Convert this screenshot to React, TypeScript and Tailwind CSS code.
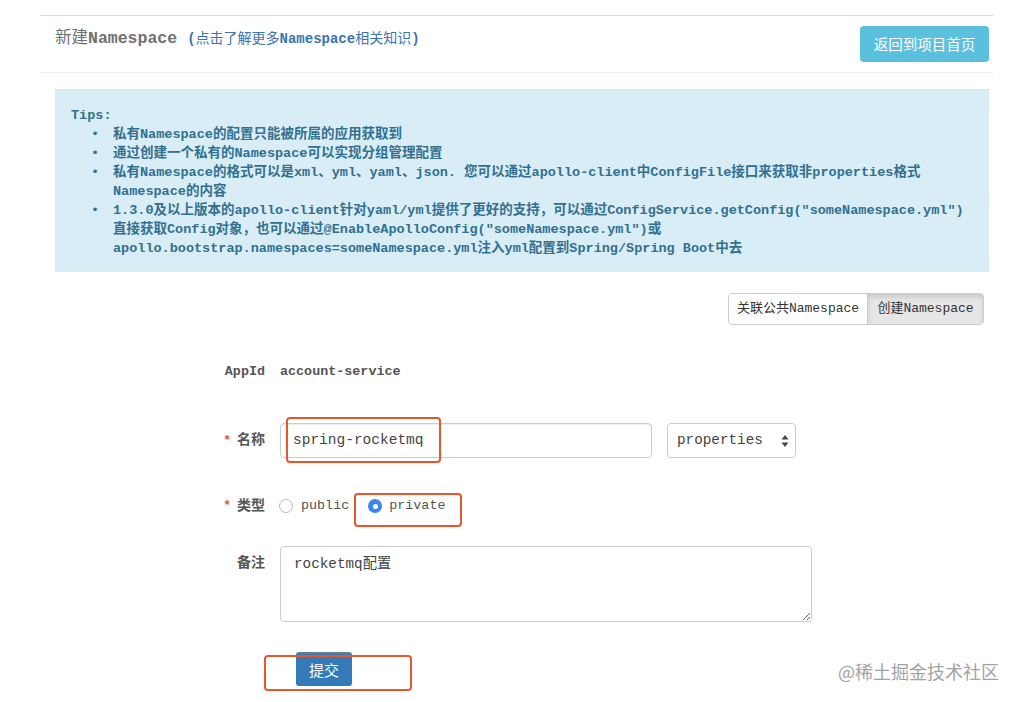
import React from 'react';

const mono = 'font-["Liberation_Mono","Noto_Sans_CJK_SC",monospace]';

const tips: string[][] = [
  ['私有Namespace的配置只能被所属的应用获取到'],
  ['通过创建一个私有的Namespace可以实现分组管理配置'],
  [
    '私有Namespace的格式可以是xml、yml、yaml、json. 您可以通过apollo-client中ConfigFile接口来获取非properties格式',
    'Namespace的内容',
  ],
  [
    '1.3.0及以上版本的apollo-client针对yaml/yml提供了更好的支持，可以通过ConfigService.getConfig("someNamespace.yml")',
    '直接获取Config对象，也可以通过@EnableApolloConfig("someNamespace.yml")或',
    'apollo.bootstrap.namespaces=someNamespace.yml注入yml配置到Spring/Spring Boot中去',
  ],
];

function Label({ text, required }: { text: string; required?: boolean }) {
  return (
    <div className="w-[56px] shrink-0 flex justify-end items-center gap-[6px] text-[14px] font-bold text-[#555] pr-[15px] box-content">
      {required && <span className="text-[#d9534f] text-[13px]">*</span>}
      <span>{text}</span>
    </div>
  );
}

function SelectArrows() {
  return (
    <svg width="8" height="14" viewBox="0 0 8 14" className="text-[#444]">
      <path d="M4 1 L7.5 5.5 H0.5 Z" fill="currentColor" />
      <path d="M4 13 L7.5 8.5 H0.5 Z" fill="currentColor" />
    </svg>
  );
}

export default function App() {
  return (
    <div className={`relative w-[1019px] h-[702px] bg-white overflow-hidden ${mono}`}>
      <div className="pl-[40px] pr-[26px] pt-[15px]">
        {/* header */}
        <div className="h-[58px] border-t border-b border-t-[#dcdcdc] border-b-[#ececec] flex items-center justify-between pl-[15px] pr-[4px]">
          <div className="flex items-baseline gap-[10px] -mt-[10px]">
            <span className="text-[16.5px] text-[#707070] font-bold">
              <span className="font-normal">新建</span>Namespace
            </span>
            <a className="text-[14px] text-[#3d74ad] font-bold">
              (<span className="font-normal">点击了解更多</span>Namespace<span className="font-normal">相关知识</span>)
            </a>
          </div>
          <button
            type="button"
            className="w-[129px] h-[36px] bg-[#5bc0de] text-white text-[14.5px] rounded-[4px] font-['Noto_Sans_CJK_SC',sans-serif]"
          >
            返回到项目首页
          </button>
        </div>

        {/* tips */}
        <div className="ml-[15px] mr-[4px] mt-[16px] h-[183px] bg-[#d9edf7] border-t border-[#cde6f1] text-[#31708f] text-[13.5px] leading-[19px] pt-[16px] pl-[16px]">
          <div className="font-bold">Tips:</div>
          <ul>
            {tips.map((lines, i) => (
              <li key={i} className="flex">
                <span className="w-[42px] text-right pr-[14px]">•</span>
                <div>
                  {lines.map((l, j) => (
                    <div key={j} className="whitespace-pre font-semibold">
                      {l}
                    </div>
                  ))}
                </div>
              </li>
            ))}
          </ul>
        </div>

        {/* switch */}
        <div className="flex justify-end mr-[9px] mt-[21px]">
          <div className="flex h-[32px] text-[13px] text-[#333] rounded-[4px] border border-[#ccc] overflow-hidden">
            <button type="button" className="w-[139px] bg-white border-r border-[#ccc]">
              关联公共Namespace
            </button>
            <button type="button" className="w-[115px] bg-[#e6e6e6] shadow-[inset_0_3px_5px_rgba(0,0,0,0.125)]">
              创建Namespace
            </button>
          </div>
        </div>

        {/* form */}
        <div className="ml-[169px] mt-[37px]">
          <div className="flex items-center h-[20px]">
            <div className="w-[56px] pr-[15px] box-content text-right text-[13.4px] font-bold text-[#555]">AppId</div>
            <div className="text-[13.4px] font-bold text-[#555]">account-service</div>
          </div>

          <div className="flex items-center mt-[41px]">
            <Label text="名称" required />
            <div className="w-[372px] h-[35px] border border-[#ccc] rounded-[4px] flex items-center pl-[12px] text-[14.5px] text-[#444] shadow-[inset_0_1px_1px_rgba(0,0,0,0.075)]">
              spring-rocketmq
            </div>
            <div className="ml-[15px] w-[129px] h-[35px] border border-[#ccc] rounded-[4px] flex items-center justify-between pl-[9px] pr-[6px] text-[14.3px] text-[#444]">
              <span>properties</span>
              <SelectArrows />
            </div>
          </div>

          <div className="flex items-center mt-[38px] h-[20px]">
            <Label text="类型" required />
            <div className="flex items-center text-[13.4px] text-[#555]">
              <span className="w-[14px] h-[14px] rounded-full border border-[#bbb] bg-white -ml-[1px]" />
              <span className="ml-[8px]">public</span>
              <span className="ml-[19px] w-[14px] h-[14px] rounded-full bg-[#3b86f0] flex items-center justify-center">
                <span className="w-[5px] h-[5px] rounded-full bg-white" />
              </span>
              <span className="ml-[7px]">private</span>
            </div>
          </div>

          <div className="flex items-start mt-[30px]">
            <div className="pt-[7px]">
              <Label text="备注" />
            </div>
            <textarea
              readOnly
              defaultValue="rocketmq配置"
              className={`w-[532px] h-[76px] border border-[#ccc] rounded-[4px] px-[13px] py-[7px] text-[14.3px] text-[#444] outline-none ${mono}`}
            />
          </div>

          <div className="mt-[30px] ml-[87px]">
            <button
              type="button"
              className="w-[56px] h-[34px] bg-[#337ab7] text-white text-[15px] rounded-[3px] border-t-[2px] border-[#6c7a8c] font-['Noto_Sans_CJK_SC',sans-serif]"
            >
              提交
            </button>
          </div>
        </div>
      </div>

      {/* annotation boxes */}
      <div className="absolute left-[286px] top-[417px] w-[155px] h-[46px] border-[2.5px] border-[#e8562a] rounded-[4px]" />
      <div className="absolute left-[354px] top-[493px] w-[108px] h-[34px] border-[2.5px] border-[#e8562a] rounded-[4px]" />
      <div className="absolute left-[264px] top-[655px] w-[148px] h-[36px] border-[2.5px] border-[#e8562a] rounded-[4px]" />

      {/* watermark */}
      <div className="absolute left-[838px] top-[659px] text-[18px] text-[#a3a3a3] font-['Noto_Sans_CJK_SC',sans-serif] leading-[24px]">
        @稀土掘金技术社区
      </div>
    </div>
  );
}
